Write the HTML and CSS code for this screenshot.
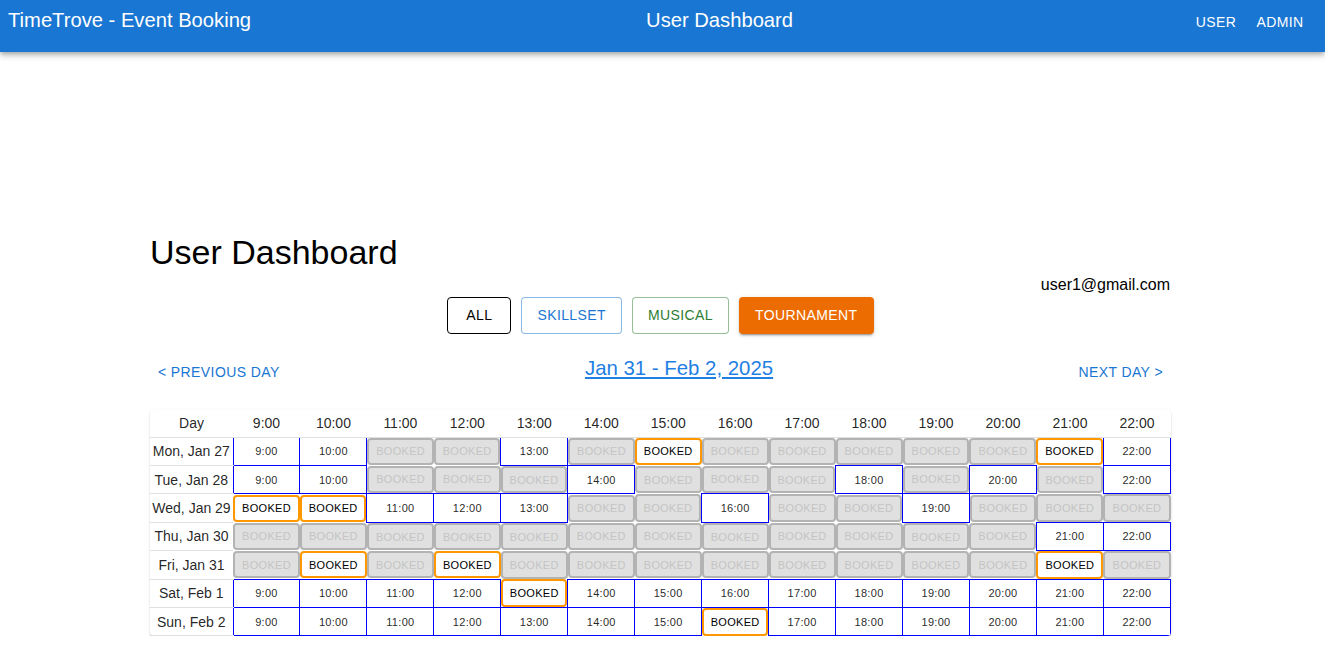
FILE: index.html
```html
<!DOCTYPE html>
<html lang="en">
<head>
<meta charset="utf-8">
<title>TimeTrove - Event Booking</title>
<link rel="stylesheet" href="styles.css">
</head>
<body>
<header class="appbar">
  <div class="brand">TimeTrove - Event Booking</div>
  <div class="bar-title">User Dashboard</div>
  <nav class="bar-links">
    <button class="bar-btn">User</button>
    <button class="bar-btn">Admin</button>
  </nav>
</header>

<main class="page">
  <h1 class="title">User Dashboard</h1>
  <div class="email">user1@gmail.com</div>

  <div class="filters">
    <button class="fbtn f-all">All</button>
    <button class="fbtn f-skill">Skillset</button>
    <button class="fbtn f-music">Musical</button>
    <button class="fbtn f-tour">Tournament</button>
  </div>

  <div class="daynav">
    <button class="tbtn">&lt; Previous Day</button>
    <a class="range" href="#">Jan 31 - Feb 2, 2025</a>
    <button class="tbtn">Next Day &gt;</button>
  </div>

  <div class="paper">
    <table class="grid">
      <colgroup>
        <col class="col-day">
        <col><col><col><col><col><col><col><col><col><col><col><col><col><col>
      </colgroup>
      <thead>
        <tr>
          <th>Day</th><th>9:00</th><th>10:00</th><th>11:00</th><th>12:00</th><th>13:00</th><th>14:00</th><th>15:00</th><th>16:00</th><th>17:00</th><th>18:00</th><th>19:00</th><th>20:00</th><th>21:00</th><th>22:00</th>
        </tr>
      </thead>
      <tbody>
        <tr>
          <td class="day">Mon, Jan 27</td>
          <td class="free"><button class="slot">9:00</button></td>
          <td class="free"><button class="slot">10:00</button></td>
          <td class="taken"><button class="slot">BOOKED</button></td>
          <td class="taken"><button class="slot">BOOKED</button></td>
          <td class="free"><button class="slot">13:00</button></td>
          <td class="taken"><button class="slot">BOOKED</button></td>
          <td class="mine"><button class="slot">BOOKED</button></td>
          <td class="taken"><button class="slot">BOOKED</button></td>
          <td class="taken"><button class="slot">BOOKED</button></td>
          <td class="taken"><button class="slot">BOOKED</button></td>
          <td class="taken"><button class="slot">BOOKED</button></td>
          <td class="taken"><button class="slot">BOOKED</button></td>
          <td class="mine"><button class="slot">BOOKED</button></td>
          <td class="free"><button class="slot">22:00</button></td>
        </tr>
        <tr>
          <td class="day">Tue, Jan 28</td>
          <td class="free"><button class="slot">9:00</button></td>
          <td class="free"><button class="slot">10:00</button></td>
          <td class="taken"><button class="slot">BOOKED</button></td>
          <td class="taken"><button class="slot">BOOKED</button></td>
          <td class="taken"><button class="slot">BOOKED</button></td>
          <td class="free"><button class="slot">14:00</button></td>
          <td class="taken"><button class="slot">BOOKED</button></td>
          <td class="taken"><button class="slot">BOOKED</button></td>
          <td class="taken"><button class="slot">BOOKED</button></td>
          <td class="free"><button class="slot">18:00</button></td>
          <td class="taken"><button class="slot">BOOKED</button></td>
          <td class="free"><button class="slot">20:00</button></td>
          <td class="taken"><button class="slot">BOOKED</button></td>
          <td class="free"><button class="slot">22:00</button></td>
        </tr>
        <tr>
          <td class="day">Wed, Jan 29</td>
          <td class="mine"><button class="slot">BOOKED</button></td>
          <td class="mine"><button class="slot">BOOKED</button></td>
          <td class="free"><button class="slot">11:00</button></td>
          <td class="free"><button class="slot">12:00</button></td>
          <td class="free"><button class="slot">13:00</button></td>
          <td class="taken"><button class="slot">BOOKED</button></td>
          <td class="taken"><button class="slot">BOOKED</button></td>
          <td class="free"><button class="slot">16:00</button></td>
          <td class="taken"><button class="slot">BOOKED</button></td>
          <td class="taken"><button class="slot">BOOKED</button></td>
          <td class="free"><button class="slot">19:00</button></td>
          <td class="taken"><button class="slot">BOOKED</button></td>
          <td class="taken"><button class="slot">BOOKED</button></td>
          <td class="taken"><button class="slot">BOOKED</button></td>
        </tr>
        <tr>
          <td class="day">Thu, Jan 30</td>
          <td class="taken"><button class="slot">BOOKED</button></td>
          <td class="taken"><button class="slot">BOOKED</button></td>
          <td class="taken"><button class="slot">BOOKED</button></td>
          <td class="taken"><button class="slot">BOOKED</button></td>
          <td class="taken"><button class="slot">BOOKED</button></td>
          <td class="taken"><button class="slot">BOOKED</button></td>
          <td class="taken"><button class="slot">BOOKED</button></td>
          <td class="taken"><button class="slot">BOOKED</button></td>
          <td class="taken"><button class="slot">BOOKED</button></td>
          <td class="taken"><button class="slot">BOOKED</button></td>
          <td class="taken"><button class="slot">BOOKED</button></td>
          <td class="taken"><button class="slot">BOOKED</button></td>
          <td class="free"><button class="slot">21:00</button></td>
          <td class="free"><button class="slot">22:00</button></td>
        </tr>
        <tr>
          <td class="day">Fri, Jan 31</td>
          <td class="taken"><button class="slot">BOOKED</button></td>
          <td class="mine"><button class="slot">BOOKED</button></td>
          <td class="taken"><button class="slot">BOOKED</button></td>
          <td class="mine"><button class="slot">BOOKED</button></td>
          <td class="taken"><button class="slot">BOOKED</button></td>
          <td class="taken"><button class="slot">BOOKED</button></td>
          <td class="taken"><button class="slot">BOOKED</button></td>
          <td class="taken"><button class="slot">BOOKED</button></td>
          <td class="taken"><button class="slot">BOOKED</button></td>
          <td class="taken"><button class="slot">BOOKED</button></td>
          <td class="taken"><button class="slot">BOOKED</button></td>
          <td class="taken"><button class="slot">BOOKED</button></td>
          <td class="mine"><button class="slot">BOOKED</button></td>
          <td class="taken"><button class="slot">BOOKED</button></td>
        </tr>
        <tr>
          <td class="day">Sat, Feb 1</td>
          <td class="free"><button class="slot">9:00</button></td>
          <td class="free"><button class="slot">10:00</button></td>
          <td class="free"><button class="slot">11:00</button></td>
          <td class="free"><button class="slot">12:00</button></td>
          <td class="mine"><button class="slot">BOOKED</button></td>
          <td class="free"><button class="slot">14:00</button></td>
          <td class="free"><button class="slot">15:00</button></td>
          <td class="free"><button class="slot">16:00</button></td>
          <td class="free"><button class="slot">17:00</button></td>
          <td class="free"><button class="slot">18:00</button></td>
          <td class="free"><button class="slot">19:00</button></td>
          <td class="free"><button class="slot">20:00</button></td>
          <td class="free"><button class="slot">21:00</button></td>
          <td class="free"><button class="slot">22:00</button></td>
        </tr>
        <tr>
          <td class="day">Sun, Feb 2</td>
          <td class="free"><button class="slot">9:00</button></td>
          <td class="free"><button class="slot">10:00</button></td>
          <td class="free"><button class="slot">11:00</button></td>
          <td class="free"><button class="slot">12:00</button></td>
          <td class="free"><button class="slot">13:00</button></td>
          <td class="free"><button class="slot">14:00</button></td>
          <td class="free"><button class="slot">15:00</button></td>
          <td class="mine"><button class="slot">BOOKED</button></td>
          <td class="free"><button class="slot">17:00</button></td>
          <td class="free"><button class="slot">18:00</button></td>
          <td class="free"><button class="slot">19:00</button></td>
          <td class="free"><button class="slot">20:00</button></td>
          <td class="free"><button class="slot">21:00</button></td>
          <td class="free"><button class="slot">22:00</button></td>
        </tr>
      </tbody>
    </table>
  </div>
</main>
</body>
</html>
```

FILE: styles.css
```css
* { box-sizing: border-box; }

html, body {
  margin: 0;
  padding: 0;
  background: #fff;
  font-family: "Liberation Sans", Arial, Helvetica, sans-serif;
  color: rgba(0, 0, 0, 0.87);
}

button {
  font-family: inherit;
  cursor: pointer;
}

/* ---------- app bar ---------- */
.appbar {
  height: 52px;
  background: #1976d2;
  color: #fff;
  display: flex;
  align-items: flex-start;
  padding: 4px 13px 0 8px;
  box-shadow: 0 2px 4px -1px rgba(0,0,0,0.2), 0 4px 5px 0 rgba(0,0,0,0.14), 0 1px 10px 0 rgba(0,0,0,0.12);
}

.brand,
.bar-title {
  font-size: 20.2px;
  line-height: 32px;
  white-space: nowrap;
}

.bar-title {
  flex: 1;
  text-align: center;
  padding-left: 4px;
}

.bar-links {
  display: flex;
}

.bar-btn {
  min-width: 64px;
  padding: 6px 8px;
  border: 0;
  background: transparent;
  color: #fff;
  font-size: 14px;
  line-height: 24.5px;
  letter-spacing: 0.4px;
  text-transform: uppercase;
}

/* ---------- page ---------- */
.page {
  width: 1021px;
  padding: 180px 4px 0 0;
  margin: 0 auto;
  box-sizing: content-box;
}

.title {
  margin: 0;
  font-size: 34px;
  line-height: 40px;
  font-weight: 400;
  color: #000;
}

.email {
  text-align: right;
  font-size: 16px;
  line-height: 24px;
  color: #000;
  padding-top: 1px;
  padding-right: 1px;
}

.filters {
  display: flex;
  justify-content: center;
  gap: 10px;
}

.fbtn {
  min-width: 64px;
  padding: 5px 15px;
  border: 1px solid;
  border-radius: 4px;
  background: #fff;
  font-size: 14px;
  line-height: 24.5px;
  letter-spacing: 0.4px;
  text-transform: uppercase;
}

.f-all { border-color: #000; color: #000; }
.f-skill { border-color: rgba(25,118,210,0.5); color: #1976d2; }
.f-music { border-color: rgba(46,125,50,0.5); color: #2e7d32; }
.f-tour {
  border: 0;
  padding: 6px 16px;
  background: #ed6c02;
  color: #fff;
  box-shadow: 0 3px 1px -2px rgba(0,0,0,0.2), 0 2px 2px 0 rgba(0,0,0,0.14), 0 1px 5px 0 rgba(0,0,0,0.12);
}

.daynav {
  margin-top: 20px;
  display: flex;
  justify-content: space-between;
  align-items: flex-start;
}

.tbtn {
  min-width: 64px;
  padding: 6px 8px;
  border: 0;
  background: transparent;
  color: #1976d2;
  font-size: 14px;
  line-height: 24.5px;
  letter-spacing: 0.4px;
  text-transform: uppercase;
}

.range {
  font-size: 20.4px;
  line-height: 28px;
  color: #1f7fe3;
  text-decoration: underline;
}

/* ---------- table ---------- */
.paper {
  margin-top: 20px;
  background: #fff;
  border-radius: 4px;
  overflow: hidden;
  box-shadow: 0 2px 1px -1px rgba(0,0,0,0.2), 0 1px 1px 0 rgba(0,0,0,0.14), 0 1px 3px 0 rgba(0,0,0,0.12);
}

.grid {
  width: 100%;
  table-layout: fixed;
  border-collapse: collapse;
  border-spacing: 0;
}

.col-day { width: 83px; }

.grid th {
  height: 27px;
  padding: 0;
  font-size: 14px;
  font-weight: 400;
  color: rgba(0,0,0,0.87);
  text-align: center;
  border-bottom: 1px solid #e0e0e0;
}

.grid td {
  padding: 0;
  text-align: center;
  vertical-align: middle;
}

.grid td.day {
  padding: 0 2px;
  font-size: 14px;
  white-space: nowrap;
  border-bottom: 1px solid #e0e0e0;
}

.grid td.free {
  border: 1px solid #0000ff;
}

.slot {
  display: block;
  width: 100%;
  height: 27.43px;
  margin: 0;
  padding: 0;
  font-size: 11px;
  letter-spacing: 0.3px;
  background: #fff;
  color: rgba(0,0,0,0.87);
  border: 0;
  white-space: nowrap;
}

.mine .slot {
  border: 2px solid #ff9800;
  border-radius: 4px;
  color: #000;
}

.taken .slot {
  border: 2px solid #b3b3b3;
  border-radius: 4px;
  background: #e0e0e0;
  color: #c4c4c4;
}
```
